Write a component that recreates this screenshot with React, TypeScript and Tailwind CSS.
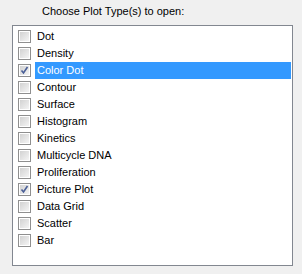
import React from "react";

const plotTypes = [
  { name: "Dot", checked: false },
  { name: "Density", checked: false },
  { name: "Color Dot", checked: true, selected: true },
  { name: "Contour", checked: false },
  { name: "Surface", checked: false },
  { name: "Histogram", checked: false },
  { name: "Kinetics", checked: false },
  { name: "Multicycle DNA", checked: false },
  { name: "Proliferation", checked: false },
  { name: "Picture Plot", checked: true },
  { name: "Data Grid", checked: false },
  { name: "Scatter", checked: false },
  { name: "Bar", checked: false },
];

function CheckBox({ checked }: { checked: boolean }) {
  return (
    <div className="w-[13px] h-[13px] border border-[#8f8f8f] bg-white p-[1px] shrink-0">
      <div className="relative w-full h-full bg-gradient-to-br from-[#d2d2d2] to-[#f4f4f4]">
        {checked && (
          <svg className="absolute inset-0" width="9" height="9" viewBox="0 0 9 9">
            <path
              d="M1.5 4.5 L3.5 7 L7.5 1"
              fill="none"
              stroke="#4a5f97"
              strokeWidth="1.6"
            />
          </svg>
        )}
      </div>
    </div>
  );
}

export default function App() {
  return (
    <div
      className="w-[302px] h-[274px] bg-[#f0f0f0] text-[11px] text-black"
      style={{ fontFamily: '"Liberation Sans", Arial, sans-serif' }}
    >
      <div className="pl-[42px] pt-[4px] h-[25px] leading-[14px]">
        Choose Plot Type(s) to open:
      </div>
      <div className="ml-[12px] w-[281px] h-[241px] border border-[#828790] bg-white pt-[2px]">
        {plotTypes.map((p) => (
          <div key={p.name} className="flex items-center h-[17px] pl-[5px]">
            <CheckBox checked={p.checked} />
            <div
              className={`ml-[4px] mr-[1px] flex-1 h-[17px] pl-[2px] flex items-center ${
                p.selected ? "bg-[#3399ff] text-white" : ""
              }`}
            >
              {p.name}
            </div>
          </div>
        ))}
      </div>
    </div>
  );
}
